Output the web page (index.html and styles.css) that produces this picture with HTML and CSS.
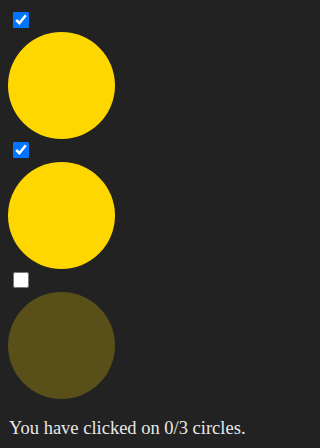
FILE: index.html
```html
<!DOCTYPE html>
<html>
<head>
<meta charset="utf-8">
<link rel="stylesheet" href="styles.css">
</head>
<body>
<div class="list">
  <div class="item">
    <input type="checkbox" class="toggle" checked>
    <div class="circle"></div>
  </div>
  <div class="item">
    <input type="checkbox" class="toggle" checked>
    <div class="circle"></div>
  </div>
  <div class="item">
    <input type="checkbox" class="toggle">
    <div class="circle dim"></div>
  </div>
</div>
<p class="status">You have clicked on 0/3 circles.</p>
</body>
</html>
```
FILE: styles.css
```css
html, body {
  margin: 0;
  background: #222222;
}
body {
  padding: 12px 8px 0 8px;
  font-family: "Liberation Serif", "Times New Roman", serif;
  color: #e8e8e8;
}
.list {
  display: flex;
  flex-direction: column;
  gap: 3px;
}
.item {
  display: flex;
  flex-direction: column;
  align-items: flex-start;
  gap: 4px;
}
.toggle {
  width: 16px;
  height: 16px;
  margin: 0 0 0 5px;
}
.circle {
  width: 107px;
  height: 107px;
  border-radius: 50%;
  background: #ffd700;
}
.circle.dim {
  opacity: 0.25;
}
.status {
  margin: 19px 0 0 1px;
  font-size: 18.5px;
}
```
